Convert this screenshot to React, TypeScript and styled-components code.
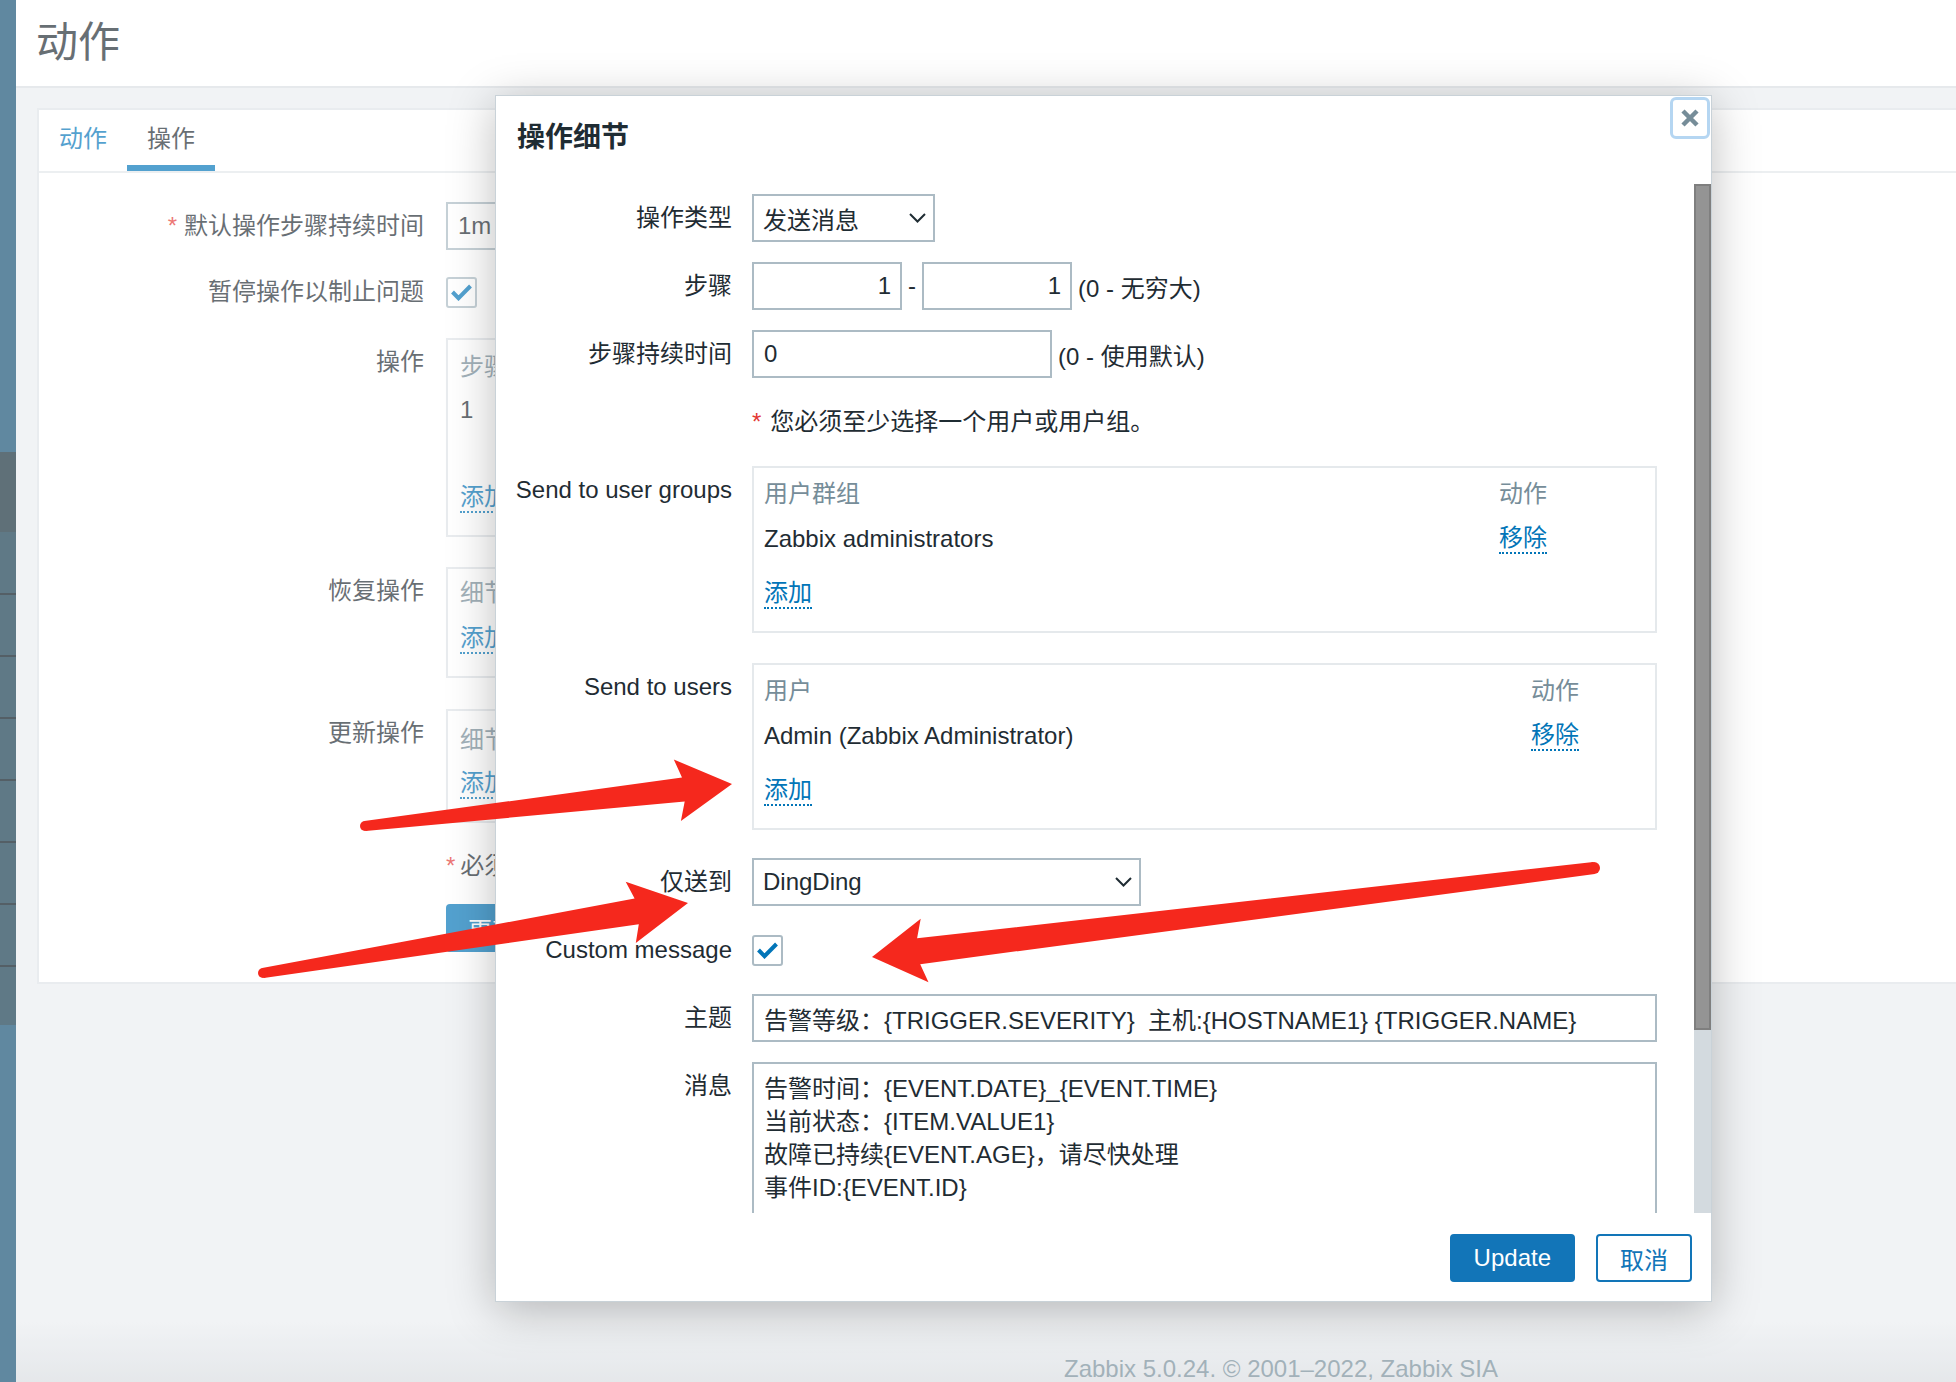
import React from 'react';
import styled, { createGlobalStyle } from 'styled-components';

const FONT = `"Liberation Sans", Arial, "Noto Sans CJK SC", sans-serif`;
const TEXT = '#1f2c33';
const LINK = '#0275b8';
const MUTED = '#768d99';
const INPUT_BORDER = '#acbbc4';
const RED = '#f5281d';

const GlobalStyle = createGlobalStyle`
  *, *::before, *::after { box-sizing: border-box; }
  html, body { margin: 0; padding: 0; }
  body {
    font-family: ${FONT};
    font-size: 24px;
    color: ${TEXT};
    background: #eaedf0;
    overflow: hidden;
  }
`;

const Screen = styled.div`
  position: relative;
  width: 1956px;
  height: 1382px;
  overflow: hidden;
  display: flex;
`;

/* ---------- sidebar ---------- */
const Sidebar = styled.nav`
  flex: none;
  width: 16px;
  display: flex;
  flex-direction: column;
  background: #155073;
`;
const SideSpacer = styled.div<{ $h: number }>`
  flex: none;
  height: ${(p) => p.$h}px;
`;
const SideGroup = styled.div`
  flex: none;
  height: 80px;
  background: #142d38;
`;
const SideItem = styled.div<{ $h: number; $first?: boolean }>`
  flex: none;
  height: ${(p) => p.$h}px;
  background: #143a4d;
  border-top: ${(p) => (p.$first ? 'none' : '2px solid #04141e')};
`;

/* ---------- page behind dialog ---------- */
const Main = styled.div`
  flex: 1;
  min-width: 0;
  display: flex;
  flex-direction: column;
`;
const Header = styled.header`
  flex: none;
  height: 88px;
  background: #fff;
  border-bottom: 2px solid #dadfe3;
  padding-left: 20px;
`;
const PageTitle = styled.h1`
  margin: 0;
  font-size: 42px;
  font-weight: normal;
  line-height: 86px;
  color: ${TEXT};
`;
const Content = styled.main`
  flex: 1;
  padding: 20px 0 0 21px;
`;
const Card = styled.section`
  background: #fff;
  border: 2px solid #dfe4e7;
  border-right: none;
`;
const TabBar = styled.div`
  display: flex;
  height: 63px;
  border-bottom: 2px solid #e3e7ea;
`;
const Tab = styled.div<{ $active?: boolean }>`
  height: 61px;
  padding: 0 20px;
  line-height: 57px;
  border-bottom: 6px solid ${(p) => (p.$active ? LINK : 'transparent')};
  color: ${(p) => (p.$active ? TEXT : LINK)};
`;
const BgForm = styled.div`
  padding: 29px 0 30px;
`;
const BgRow = styled.div<{ $mt?: number }>`
  display: grid;
  grid-template-columns: 385px 1fr;
  column-gap: 22px;
  align-items: start;
  margin-top: ${(p) => p.$mt ?? 0}px;
`;
const BgLabel = styled.div`
  text-align: right;
  line-height: 48px;
  white-space: nowrap;
`;
const BgLine = styled.div`
  line-height: 48px;
  white-space: nowrap;
`;
const Asterisk = styled.span<{ $gap?: number }>`
  color: #e33734;
  margin-right: ${(p) => p.$gap ?? 7}px;
`;
const BgBox = styled.div`
  width: 300px;
  border: 2px solid #dfe4e7;
  padding: 0 12px 22px;
`;
const BgHead = styled.div<{ $h: number }>`
  height: ${(p) => p.$h}px;
  line-height: ${(p) => p.$h}px;
  color: ${MUTED};
  white-space: nowrap;
`;
const BgCell = styled.div<{ $h: number }>`
  height: ${(p) => p.$h}px;
  padding-top: 2px;
  line-height: 28px;
`;
const BgButton = styled.button`
  height: 48px;
  padding: 0 22px;
  border: none;
  border-radius: 4px;
  background: ${LINK};
  color: #fff;
  font: 24px ${FONT};
`;
const AddRow = styled.div<{ $mt?: number }>`
  display: flex;
  margin-top: ${(p) => p.$mt ?? 21}px;
`;

const PageFooter = styled.footer`
  flex: none;
  height: 60px;
  padding: 32px 0 0 590px;
  text-align: center;
  line-height: 30px;
  color: ${MUTED};
  background: linear-gradient(#eaedf0, #d9dde1);
`;

const Overlay = styled.div`
  position: absolute;
  inset: 0;
  z-index: 1;
  background: rgba(255, 255, 255, 0.32);
`;

/* ---------- shared controls ---------- */
const TextBox = styled.input<{ $w?: number; $align?: string }>`
  width: ${(p) => (p.$w ? `${p.$w}px` : '100%')};
  height: 48px;
  margin: 0;
  border: 2px solid ${INPUT_BORDER};
  border-radius: 0;
  background: #fff;
  padding: 0 ${(p) => (p.$align === 'right' ? '9px' : '10px')};
  font: 24px ${FONT};
  color: ${TEXT};
  text-align: ${(p) => p.$align || 'left'};
  outline: none;
`;
const CheckCell = styled.div`
  height: 48px;
  display: flex;
  align-items: center;
`;
const CheckBox = styled.span`
  display: inline-flex;
  align-items: center;
  justify-content: center;
  width: 31px;
  height: 31px;
  border: 2px solid ${INPUT_BORDER};
  border-radius: 3px;
  background: #fff;
`;
const ActionLink = styled.span`
  display: inline-block;
  line-height: 28px;
  color: ${LINK};
  border-bottom: 2px dotted ${LINK};
  cursor: pointer;
`;

const Check = () => (
  <CheckBox>
    <svg width="21" height="17" viewBox="0 0 21 17">
      <path d="M1.5 8 L7.5 14.2 L19.5 2" fill="none" stroke={LINK} strokeWidth="4" />
    </svg>
  </CheckBox>
);

/* ---------- dialog ---------- */
const Dialog = styled.div`
  position: absolute;
  left: 495px;
  top: 95px;
  z-index: 2;
  width: 1217px;
  height: 1207px;
  background: #fff;
  border: 1px solid #c9d2d8;
  box-shadow: 0 8px 44px rgba(0, 0, 0, 0.26);
  display: flex;
  flex-direction: column;
`;
const DialogHeader = styled.div`
  position: relative;
  flex: none;
  height: 88px;
  padding-left: 21px;
`;
const DialogTitle = styled.h4`
  margin: 0;
  font-size: 28px;
  font-weight: bold;
  line-height: 84px;
  color: ${TEXT};
`;
const CloseButton = styled.button`
  position: absolute;
  top: 1px;
  right: 1px;
  width: 40px;
  height: 42px;
  padding: 0;
  border: 3px solid #b5d6f2;
  border-radius: 6px;
  background: #fff;
  display: flex;
  align-items: center;
  justify-content: center;
`;
const DialogBody = styled.div`
  flex: 1;
  min-height: 0;
  display: flex;
`;
const BodyScroll = styled.div`
  flex: 1;
  overflow: hidden;
  padding-top: 10px;
`;
const ScrollTrack = styled.div`
  flex: none;
  width: 17px;
  background: #d3dadf;
`;
const ScrollThumb = styled.div`
  height: 846px;
  background: #949494;
  border: 2px solid #7f7f7f;
`;
const FormGrid = styled.div`
  display: grid;
  grid-template-columns: 236px 905px;
  column-gap: 20px;
  row-gap: 20px;
  align-items: start;
`;
const Label = styled.div`
  text-align: right;
  line-height: 48px;
  white-space: nowrap;
`;
const Inline = styled.div`
  display: flex;
  align-items: center;
  height: 48px;
  white-space: nowrap;
`;
const Dash = styled.span`
  margin: 0 6px;
`;
const Hint = styled.span`
  margin-left: 6px;
`;
const Note = styled.div`
  line-height: 48px;
  white-space: nowrap;
`;
const SelectBox = styled.div<{ $w: number }>`
  width: ${(p) => p.$w}px;
  height: 48px;
  border: 2px solid ${INPUT_BORDER};
  background: #fff;
  display: flex;
  align-items: center;
  justify-content: space-between;
  padding: 0 7px 0 9px;
  white-space: nowrap;
`;
const TableBox = styled.div<{ $mb: number }>`
  border: 2px solid #e5e9ec;
  padding: 0 12px 22px 10px;
  margin-bottom: ${(p) => p.$mb}px;
`;
const TGrid = styled.div`
  display: grid;
  grid-template-columns: 1fr auto;
`;
const HeadCell = styled.div<{ $pr?: number }>`
  height: 52px;
  line-height: 52px;
  color: ${MUTED};
  padding-right: ${(p) => p.$pr ?? 0}px;
  white-space: nowrap;
`;
const DataCell = styled.div<{ $pr?: number }>`
  height: 38px;
  display: flex;
  align-items: center;
  padding-right: ${(p) => p.$pr ?? 0}px;
  white-space: nowrap;
`;
const MessageArea = styled.textarea`
  display: block;
  width: 100%;
  height: 320px;
  margin: 0;
  border: 2px solid ${INPUT_BORDER};
  border-radius: 0;
  padding: 8px 10px;
  font: 24px ${FONT};
  line-height: 33px;
  color: ${TEXT};
  resize: none;
  overflow: hidden;
  outline: none;
`;
const DialogFooter = styled.div`
  flex: none;
  height: 88px;
  display: flex;
  justify-content: flex-end;
  align-items: flex-start;
  gap: 21px;
  padding: 21px 19px 0 0;
`;
const Btn = styled.button<{ $primary?: boolean }>`
  height: 48px;
  padding: 0 22px;
  border: 2px solid #1275b8;
  border-radius: 4px;
  background: ${(p) => (p.$primary ? '#1275b8' : '#fff')};
  color: ${(p) => (p.$primary ? '#fff' : '#1275b8')};
  font: 24px ${FONT};
`;

const Chevron = () => (
  <svg width="17" height="10" viewBox="0 0 17 10">
    <path d="M1 1 L8.5 8.5 L16 1" fill="none" stroke={TEXT} strokeWidth="2" />
  </svg>
);

/* ---------- annotation arrows ---------- */
const Annotations = styled.svg`
  position: absolute;
  left: 0;
  top: 0;
  z-index: 3;
  pointer-events: none;
`;

type Pt = [number, number];
function arrowShape(tail: Pt, tip: Pt, headLen: number, headHalf: number, w0: number, w1: number): string {
  const dx = tip[0] - tail[0];
  const dy = tip[1] - tail[1];
  const L = Math.hypot(dx, dy);
  const ux = dx / L;
  const uy = dy / L;
  const nx = -uy;
  const ny = ux;
  const bx = tip[0] - ux * headLen;
  const by = tip[1] - uy * headLen;
  const pts: Pt[] = [
    [tail[0] + nx * w0, tail[1] + ny * w0],
    [bx + nx * w1 + ux * 3, by + ny * w1 + uy * 3],
    [bx + nx * headHalf - ux * 3, by + ny * headHalf - uy * 3],
    tip,
    [bx - nx * headHalf - ux * 3, by - ny * headHalf - uy * 3],
    [bx - nx * w1 + ux * 3, by - ny * w1 + uy * 3],
    [tail[0] - nx * w0, tail[1] - ny * w0],
  ];
  return pts.map((p) => `${p[0].toFixed(1)},${p[1].toFixed(1)}`).join(' ');
}

const arrows: { tail: Pt; tip: Pt; hl: number; hh: number; w0: number; w1: number }[] = [
  { tail: [365, 826], tip: [732, 784], hl: 52, hh: 31, w0: 5, w1: 12 },
  { tail: [263, 973], tip: [688, 903], hl: 55, hh: 31, w0: 5, w1: 13 },
  { tail: [1594, 868], tip: [872, 957], hl: 50, hh: 32, w0: 6, w1: 13 },
];

const sideItems = [61, 62, 62, 62, 62, 62, 62, 60];

export default function App() {
  return (
    <>
      <GlobalStyle />
      <Screen>
        <Sidebar>
          <SideSpacer $h={452} />
          <SideGroup />
          {sideItems.map((h, i) => (
            <SideItem key={i} $h={h} $first={i === 0} />
          ))}
        </Sidebar>

        <Main>
          <Header>
            <PageTitle>动作</PageTitle>
          </Header>
          <Content>
            <Card>
              <TabBar>
                <Tab>动作</Tab>
                <Tab $active>操作</Tab>
              </TabBar>
              <BgForm>
                <BgRow>
                  <BgLabel>
                    <Asterisk>*</Asterisk>默认操作步骤持续时间
                  </BgLabel>
                  <div>
                    <TextBox $w={300} defaultValue="1m" readOnly />
                  </div>
                </BgRow>
                <BgRow $mt={18}>
                  <BgLabel>暂停操作以制止问题</BgLabel>
                  <CheckCell>
                    <Check />
                  </CheckCell>
                </BgRow>
                <BgRow $mt={22}>
                  <BgLabel>操作</BgLabel>
                  <BgBox>
                    <BgHead $h={54}>步骤</BgHead>
                    <BgCell $h={74}>1</BgCell>
                    <AddRow $mt={15}>
                      <ActionLink>添加</ActionLink>
                    </AddRow>
                  </BgBox>
                </BgRow>
                <BgRow $mt={30}>
                  <BgLabel>恢复操作</BgLabel>
                  <BgBox>
                    <BgHead $h={48}>细节</BgHead>
                    <AddRow $mt={7}>
                      <ActionLink>添加</ActionLink>
                    </AddRow>
                  </BgBox>
                </BgRow>
                <BgRow $mt={31}>
                  <BgLabel>更新操作</BgLabel>
                  <BgBox>
                    <BgHead $h={58}>细节</BgHead>
                    <AddRow $mt={0}>
                      <ActionLink>添加</ActionLink>
                    </AddRow>
                  </BgBox>
                </BgRow>
                <BgRow $mt={19}>
                  <div />
                  <BgLine>
                    <Asterisk $gap={5}>*</Asterisk>必须至少
                  </BgLine>
                </BgRow>
                <BgRow $mt={14}>
                  <div />
                  <div>
                    <BgButton>更新</BgButton>
                  </div>
                </BgRow>
              </BgForm>
            </Card>
          </Content>
          <PageFooter>Zabbix 5.0.24. © 2001–2022, Zabbix SIA</PageFooter>
        </Main>

        <Overlay />

        <Dialog>
          <DialogHeader>
            <DialogTitle>操作细节</DialogTitle>
            <CloseButton aria-label="close">
              <svg width="20" height="20" viewBox="0 0 20 20">
                <path d="M3 3 L17 17 M17 3 L3 17" stroke={MUTED} strokeWidth="4.5" />
              </svg>
            </CloseButton>
          </DialogHeader>
          <DialogBody>
            <BodyScroll>
              <FormGrid>
                <Label>操作类型</Label>
                <SelectBox $w={183}>
                  <span>发送消息</span>
                  <Chevron />
                </SelectBox>

                <Label>步骤</Label>
                <Inline>
                  <TextBox $w={150} $align="right" defaultValue="1" readOnly />
                  <Dash>-</Dash>
                  <TextBox $w={150} $align="right" defaultValue="1" readOnly />
                  <Hint>(0 - 无穷大)</Hint>
                </Inline>

                <Label>步骤持续时间</Label>
                <Inline>
                  <TextBox $w={300} defaultValue="0" readOnly />
                  <Hint>(0 - 使用默认)</Hint>
                </Inline>

                <div />
                <Note>
                  <Asterisk $gap={9}>*</Asterisk>您必须至少选择一个用户或用户组。
                </Note>

                <Label>Send to user groups</Label>
                <TableBox $mb={10}>
                  <TGrid>
                    <HeadCell>用户群组</HeadCell>
                    <HeadCell $pr={96}>动作</HeadCell>
                    <DataCell>Zabbix administrators</DataCell>
                    <DataCell $pr={96}>
                      <ActionLink>移除</ActionLink>
                    </DataCell>
                  </TGrid>
                  <AddRow>
                    <ActionLink>添加</ActionLink>
                  </AddRow>
                </TableBox>

                <Label>Send to users</Label>
                <TableBox $mb={8}>
                  <TGrid>
                    <HeadCell>用户</HeadCell>
                    <HeadCell $pr={64}>动作</HeadCell>
                    <DataCell>Admin (Zabbix Administrator)</DataCell>
                    <DataCell $pr={64}>
                      <ActionLink>移除</ActionLink>
                    </DataCell>
                  </TGrid>
                  <AddRow>
                    <ActionLink>添加</ActionLink>
                  </AddRow>
                </TableBox>

                <Label>仅送到</Label>
                <SelectBox $w={389}>
                  <span>DingDing</span>
                  <Chevron />
                </SelectBox>

                <Label>Custom message</Label>
                <CheckCell>
                  <Check />
                </CheckCell>

                <Label>主题</Label>
                <TextBox
                  defaultValue="告警等级：{TRIGGER.SEVERITY}  主机:{HOSTNAME1} {TRIGGER.NAME}"
                  readOnly
                />

                <Label>消息</Label>
                <MessageArea
                  readOnly
                  defaultValue={
                    '告警时间：{EVENT.DATE}_{EVENT.TIME}\n当前状态：{ITEM.VALUE1}\n故障已持续{EVENT.AGE}，请尽快处理\n事件ID:{EVENT.ID}'
                  }
                />
              </FormGrid>
            </BodyScroll>
            <ScrollTrack>
              <ScrollThumb />
            </ScrollTrack>
          </DialogBody>
          <DialogFooter>
            <Btn $primary>Update</Btn>
            <Btn>取消</Btn>
          </DialogFooter>
        </Dialog>

        <Annotations width="1956" height="1382" viewBox="0 0 1956 1382">
          {arrows.map((a, i) => (
            <g key={i} fill={RED}>
              <polygon points={arrowShape(a.tail, a.tip, a.hl, a.hh, a.w0, a.w1)} />
              <circle cx={a.tail[0]} cy={a.tail[1]} r={a.w0} />
            </g>
          ))}
        </Annotations>
      </Screen>
    </>
  );
}
